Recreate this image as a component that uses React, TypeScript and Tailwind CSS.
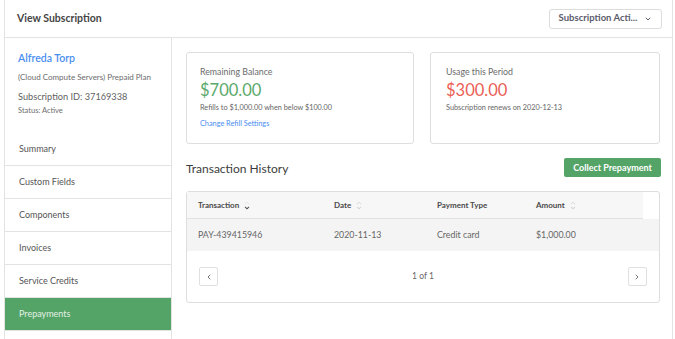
import { ChevronDown, ChevronLeft, ChevronRight } from "lucide-react";

const navItems = ["Summary", "Custom Fields", "Components", "Invoices", "Service Credits", "Prepayments"];

function SortIcon({ active }: { active?: boolean }) {
  return (
    <svg width="6" height="9" viewBox="0 0 6 9" className="ml-[5px] shrink-0">
      <path d="M1 3.2L3 1.2L5 3.2" fill="none" stroke={active ? "#e2e2e2" : "#d6d6d6"} strokeWidth="1" />
      <path d="M1 5.8L3 7.8L5 5.8" fill="none" stroke={active ? "#555" : "#d6d6d6"} strokeWidth="1.1" />
    </svg>
  );
}

export default function App() {
  return (
    <div className="h-[339px] w-[675px] overflow-hidden bg-white font-['Lato',sans-serif] text-[#3d3d3d]">
      <div className="ml-[4px] flex h-full w-[669px] flex-col border-x border-[#e3e3e3]">
        {/* Header */}
        <header className="flex h-[38px] shrink-0 items-center justify-between border-b border-[#e3e3e3] pl-[12px] pr-[10px]">
          <h1 className="text-[10.5px] font-bold text-[#454545]">View Subscription</h1>
          <button className="flex h-[20px] w-[113px] items-center justify-center gap-[7px] rounded-[3px] border border-[#dcdcdc] bg-white text-[9.5px] font-bold text-[#5b5b6b]">
            Subscription Acti...
            <ChevronDown className="h-[8px] w-[8px]" strokeWidth={3} />
          </button>
        </header>

        <div className="flex min-h-0 flex-1">
          {/* Sidebar */}
          <aside className="flex w-[167px] shrink-0 flex-col border-r border-[#e3e3e3]">
            <div className="px-[13px] pt-[12px] pb-[16px]">
              <div className="text-[10.5px] font-semibold leading-[16px] text-[#4a8ef0]">Alfreda Torp</div>
              <div className="mt-[5px] whitespace-nowrap text-[8px] leading-[12px] text-[#6b6b6b]">(Cloud Compute Servers) Prepaid Plan</div>
              <div className="mt-[7px] text-[9.2px] leading-[14px] text-[#5f5f5f]">Subscription ID: 37169338</div>
              <div className="mt-[1px] text-[7.5px] leading-[12px] text-[#6e6e6e]">Status: Active</div>
            </div>
            <nav className="flex flex-col">
              {navItems.map((item) => (
                <div
                  key={item}
                  className={
                    item === "Prepayments"
                      ? "flex h-[33px] items-center border-b border-[#e3e3e3] bg-[#55a467] px-[14px] text-[9px] text-[#e3f0e5]"
                      : "flex h-[33px] items-center border-b border-[#e3e3e3] px-[14px] text-[9px] text-[#555]"
                  }
                >
                  {item}
                </div>
              ))}
              <div className="h-[33px]" />
            </nav>
          </aside>

          {/* Main */}
          <main className="flex-1 pl-[14px] pr-[11px] pt-[14px]">
            <div className="grid grid-cols-[228px_230px] gap-[16px]">
              <div className="h-[92px] rounded-[3px] border border-[#dedede] px-[13px] pt-[13px]">
                <div className="text-[8.8px] leading-[12px] text-[#6b6b6b]">Remaining Balance</div>
                <div className="mt-[1px] text-[16.5px] leading-[22px] text-[#5aa96b]">$700.00</div>
                <div className="mt-[2px] text-[7.3px] leading-[10px] text-[#666]">Refills to $1,000.00 when below $100.00</div>
                <div className="mt-[6px] text-[7.3px] leading-[10px] text-[#4a8ef0]">Change Refill Settings</div>
              </div>
              <div className="h-[92px] rounded-[3px] border border-[#dedede] px-[15px] pt-[13px]">
                <div className="text-[8.8px] leading-[12px] text-[#6b6b6b]">Usage this Period</div>
                <div className="mt-[1px] text-[16.5px] leading-[22px] text-[#ea5f57]">$300.00</div>
                <div className="mt-[2px] text-[7.3px] leading-[10px] text-[#666]">Subscription renews on 2020-12-13</div>
              </div>
            </div>

            <div className="mt-[14px] flex h-[19px] items-center justify-between">
              <h2 className="pt-[2px] text-[12px] text-[#3d3d3d]">Transaction History</h2>
              <button className="flex h-[19px] w-[97px] items-center justify-center rounded-[2px] bg-[#55a467] text-[9px] font-bold text-white">
                Collect Prepayment
              </button>
            </div>

            <div className="mt-[14px] w-[474px] rounded-[3px] border border-[#dedede]">
              <div className="grid h-[27px] w-[456px] grid-cols-[147px_103px_99px_1fr] items-center border-b border-[#e2e2e2] bg-[#f7f7f7] text-[8px] font-bold text-[#4a4a4a]">
                <div className="flex items-center pl-[11px]">
                  Transaction
                  <SortIcon active />
                </div>
                <div className="flex items-center">
                  Date
                  <SortIcon />
                </div>
                <div>Payment Type</div>
                <div className="flex items-center">
                  Amount
                  <SortIcon />
                </div>
              </div>
              <div className="grid h-[32px] grid-cols-[147px_103px_99px_1fr] items-center bg-[#f4f4f4] text-[8.8px] text-[#666]">
                <div className="pl-[11px]">PAY-439415946</div>
                <div>2020-11-13</div>
                <div>Credit card</div>
                <div>$1,000.00</div>
              </div>
              <div className="flex h-[51px] items-center justify-between px-[12px]">
                <button className="grid h-[19px] w-[19px] place-items-center rounded-[2px] border border-[#e0e0e0] bg-white text-[#777]">
                  <ChevronLeft className="h-[8px] w-[8px]" strokeWidth={3} />
                </button>
                <span className="text-[8.5px] text-[#666]">1 of 1</span>
                <button className="grid h-[19px] w-[19px] place-items-center rounded-[2px] border border-[#e0e0e0] bg-white text-[#777]">
                  <ChevronRight className="h-[8px] w-[8px]" strokeWidth={3} />
                </button>
              </div>
            </div>
          </main>
        </div>
      </div>
    </div>
  );
}
